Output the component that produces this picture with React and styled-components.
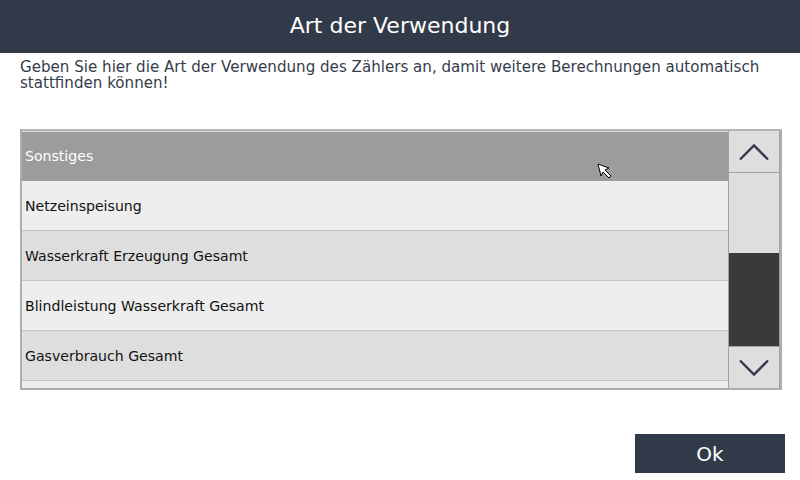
import React from "react";
import styled, { createGlobalStyle } from "styled-components";

const GlobalStyle = createGlobalStyle`
  html, body { margin: 0; padding: 0; background: #ffffff; }
  body { font-family: "DejaVu Sans", "Liberation Sans", sans-serif; }
  * { box-sizing: border-box; }
`;

const items = [
  "Sonstiges",
  "Netzeinspeisung",
  "Wasserkraft Erzeugung Gesamt",
  "Blindleistung Wasserkraft Gesamt",
  "Gasverbrauch Gesamt",
  "",
];

const Page = styled.div`
  position: relative;
  width: 800px;
  height: 480px;
  display: flex;
  flex-direction: column;
  background: #ffffff;
  overflow: hidden;
`;

const Header = styled.div`
  height: 53px;
  flex: none;
  background: #323a4a;
  color: #ffffff;
  font-size: 22px;
  display: flex;
  align-items: center;
  justify-content: center;
  padding-bottom: 2px;
`;

const Description = styled.p`
  margin: 0;
  padding: 6px 20px 0 20px;
  font-size: 15.1px;
  line-height: 16px;
  color: #353c4c;
  height: 38px;
`;

const Frame = styled.div`
  margin: 38px 18px 0 20px;
  height: 261px;
  border: 2px solid #aab0aa;
  border-top-color: #b0b6b0;
  box-shadow: inset 1px 1px 0 #d6dad6;
  display: grid;
  grid-template-columns: 1fr 52px;
  overflow: hidden;
  background: #eeeeee;
`;

const List = styled.div`
  display: flex;
  flex-direction: column;
  overflow: hidden;
  padding-top: 1px;
`;

const Row = styled.div`
  flex: none;
  height: 50px;
  padding-left: 3px;
  display: flex;
  align-items: center;
  font-size: 14.1px;
  border-bottom: 1px solid #c3c7c3;
  background: ${(p) => (p.$selected ? "#9c9c9c" : p.$odd ? "#dedede" : "#eeeeee")};
  color: ${(p) => (p.$selected ? "#ffffff" : "#111111")};
  ${(p) => p.$selected && "border-bottom-color: #9c9c9c; height: 49px;"}
`;

const Scrollbar = styled.div`
  display: flex;
  flex-direction: column;
  border-left: 1px solid #9ea49e;
  border-right: 1px solid #9ea49e;
  background: #dedede;
  padding-top: 1px;
`;

const ArrowButton = styled.div`
  flex: none;
  height: ${(p) => p.$h}px;
  display: flex;
  align-items: center;
  justify-content: center;
  background: #dedede;
  ${(p) => (p.$up ? "border-bottom: 1px solid #9ea49e;" : "border-top: 1px solid #9ea49e;")}
`;

const Track = styled.div`
  flex: 1;
  display: flex;
  flex-direction: column;
  justify-content: flex-end;
`;

const Thumb = styled.div`
  height: 93px;
  background: #3a3a3a;
`;

const Footer = styled.div`
  flex: 1;
  display: flex;
  justify-content: flex-end;
  align-items: flex-start;
  padding: 44px 15px 0 0;
`;

const OkButton = styled.button`
  width: 150px;
  height: 39px;
  border: none;
  background: #323a4a;
  color: #ffffff;
  font-family: "DejaVu Sans", sans-serif;
  font-size: 20px;
  padding: 0;
`;

const Cursor = styled.svg`
  position: absolute;
  left: 597px;
  top: 163px;
`;

const Chevron = ({ up }) => (
  <svg width="32" height="18" viewBox="0 0 32 18">
    <path
      d={up ? "M2 16.5 L16 2.5 L30 16.5" : "M2 1.5 L16 15.5 L30 1.5"}
      fill="none"
      stroke="#323a4a"
      strokeWidth="2.4"
    />
  </svg>
);

export default function App() {
  return (
    <Page>
      <GlobalStyle />
      <Header>Art der Verwendung</Header>
      <Description>
        Geben Sie hier die Art der Verwendung des Zählers an, damit weitere Berechnungen automatisch stattfinden können!
      </Description>
      <Frame>
        <List>
          {items.map((t, i) => (
            <Row key={i} $selected={i === 0} $odd={i % 2 === 0}>
              {t}
            </Row>
          ))}
        </List>
        <Scrollbar>
          <ArrowButton $up $h={41}>
            <Chevron up />
          </ArrowButton>
          <Track>
            <Thumb />
          </Track>
          <ArrowButton $h={42}>
            <Chevron />
          </ArrowButton>
        </Scrollbar>
      </Frame>
      <Footer>
        <OkButton>Ok</OkButton>
      </Footer>
      <Cursor width="16" height="18" viewBox="0 0 16 18">
        <path d="M1 1 L12 5 L8 7 L14 13 L12 15 L6 9 L4 13 Z" fill="#ffffff" stroke="#000000" strokeWidth="1" />
      </Cursor>
    </Page>
  );
}
